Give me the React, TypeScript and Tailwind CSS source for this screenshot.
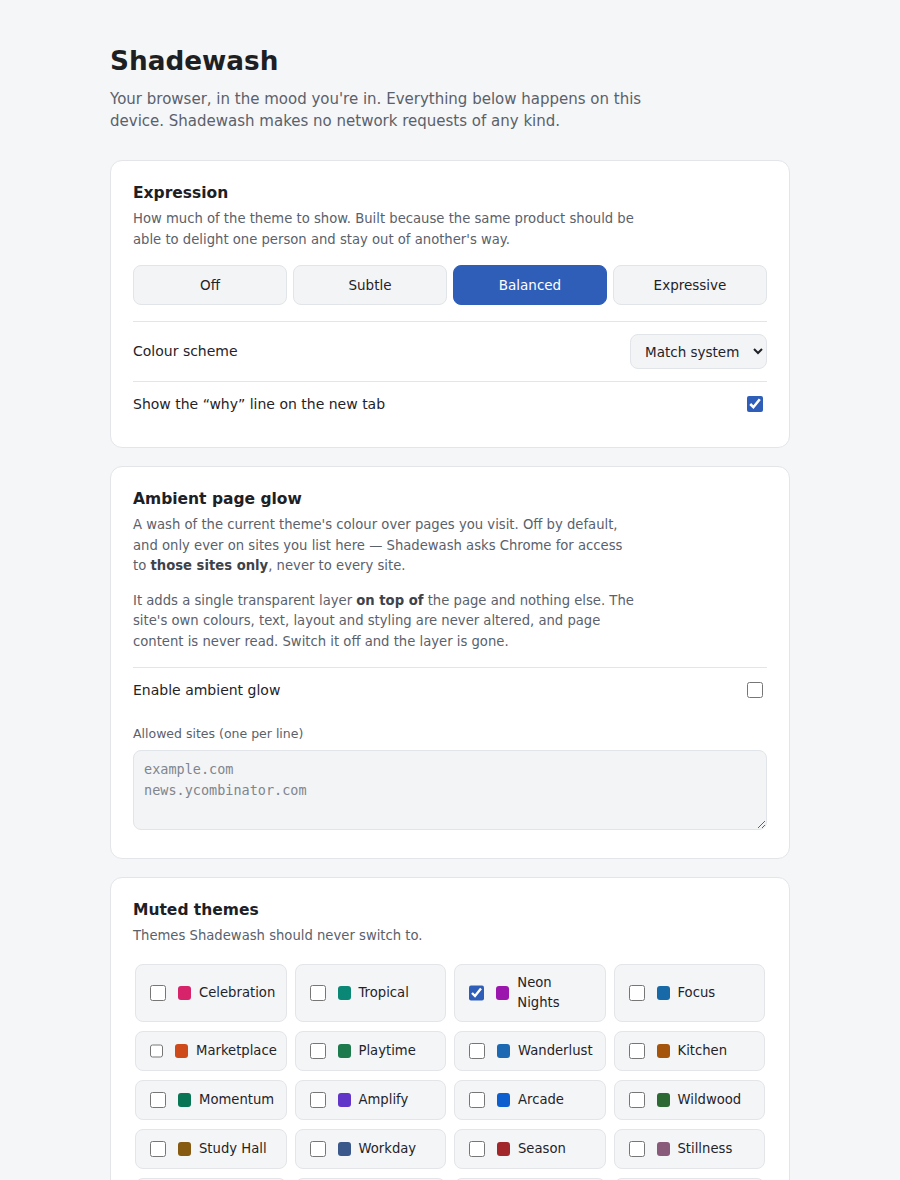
import React, { useState } from 'react';

const levels = ['Off', 'Subtle', 'Balanced', 'Expressive'];

const themes: { name: string; color: string }[] = [
  { name: 'Celebration', color: '#d6236a' },
  { name: 'Tropical', color: '#0b8775' },
  { name: 'Neon Nights', color: '#9b16ad' },
  { name: 'Focus', color: '#1769a8' },
  { name: 'Marketplace', color: '#cf4a1a' },
  { name: 'Playtime', color: '#1d7a4c' },
  { name: 'Wanderlust', color: '#1c68b3' },
  { name: 'Kitchen', color: '#a5550b' },
  { name: 'Momentum', color: '#087554' },
  { name: 'Amplify', color: '#6235c9' },
  { name: 'Arcade', color: '#0d5fcf' },
  { name: 'Wildwood', color: '#2d6a33' },
  { name: 'Study Hall', color: '#875a12' },
  { name: 'Workday', color: '#3a5889' },
  { name: 'Season', color: '#a2272b' },
  { name: 'Stillness', color: '#8a5a7b' },
  { name: 'Harvest', color: '#9a6a10' },
  { name: 'Nocturne', color: '#32387a' },
  { name: 'Bloom', color: '#c23c7e' },
  { name: 'Coastal', color: '#16788c' },
];

const Card: React.FC<{ title: string; children: React.ReactNode }> = ({ title, children }) => (
  <section className="rounded-xl border border-[#e3e5e9] bg-white p-[22px]">
    <h2 className="text-[15.5px] leading-5 font-bold text-[#1d2025]">{title}</h2>
    {children}
  </section>
);

export default function App() {
  const [level, setLevel] = useState('Balanced');
  const [why, setWhy] = useState(true);
  const [glow, setGlow] = useState(false);
  const [muted, setMuted] = useState<string[]>(['Neon Nights']);

  const toggle = (name: string) =>
    setMuted((m) => (m.includes(name) ? m.filter((n) => n !== name) : [...m, name]));

  return (
    <div className="min-h-screen bg-[#f5f6f8] font-['DejaVu_Sans',sans-serif] text-[#1f2328]">
      <div className="mx-auto w-[680px] pt-[45px] pb-10">
        <h1 className="text-[26.3px] leading-8 font-bold text-[#1d1f23]">Shadewash</h1>
        <p className="mt-[11px] max-w-[560px] text-[15px] leading-[22px] text-[#5a616b]">
          Your browser, in the mood you're in. Everything below happens on this device. Shadewash
          makes no network requests of any kind.
        </p>

        <div className="mt-7 flex flex-col gap-[18px]">
          <Card title="Expression">
            <p className="mt-1.5 max-w-[504px] text-[13.2px] leading-[20.5px] text-[#5a616b]">
              How much of the theme to show. Built because the same product should be able to
              delight one person and stay out of another's way.
            </p>
            <div className="mt-[15px] grid grid-cols-4 gap-1.5">
              {levels.map((l) => (
                <button
                  key={l}
                  onClick={() => setLevel(l)}
                  className={
                    l === level
                      ? 'h-10 rounded-lg border border-[#2f5eb8] bg-[#2f5eb8] text-[13.5px] text-white'
                      : 'h-10 rounded-lg border border-[#e1e4e8] bg-[#f3f4f6] text-[13.5px] text-[#1f2328]'
                  }
                >
                  {l}
                </button>
              ))}
            </div>
            <div className="mt-4 flex items-center justify-between border-t border-[#e3e5e9] py-3">
              <span className="text-[14px]">Colour scheme</span>
              <select className="h-[35px] w-[137px] rounded-lg border border-[#e1e4e8] bg-[#f3f4f6] pl-2.5 text-[13.5px] text-[#1f2328]">
                <option>Match system</option>
                <option>Light</option>
                <option>Dark</option>
              </select>
            </div>
            <div className="flex items-center justify-between border-t border-[#e3e5e9] pt-3 pb-[11px] leading-5">
              <span className="text-[14px]">Show the “why” line on the new tab</span>
              <input
                type="checkbox"
                checked={why}
                onChange={() => setWhy(!why)}
                className="mr-1 h-4 w-4 accent-[#2f5eb8]"
              />
            </div>
          </Card>

          <Card title="Ambient page glow">
            <p className="mt-1.5 max-w-[504px] text-[13.2px] leading-[20.5px] text-[#5a616b]">
              A wash of the current theme's colour over pages you visit. Off by default, and only
              ever on sites you list here — Shadewash asks Chrome for access to{' '}
              <strong className="font-bold text-[#3d434b]">those sites only</strong>, never to every
              site.
            </p>
            <p className="mt-3.5 max-w-[504px] text-[13.2px] leading-[20.5px] text-[#5a616b]">
              It adds a single transparent layer{' '}
              <strong className="font-bold text-[#3d434b]">on top of</strong> the page and nothing
              else. The site's own colours, text, layout and styling are never altered, and page
              content is never read. Switch it off and the layer is gone.
            </p>
            <div className="mt-[15px] flex items-center justify-between border-t border-[#e3e5e9] py-3 leading-5">
              <span className="text-[14px]">Enable ambient glow</span>
              <input
                type="checkbox"
                checked={glow}
                onChange={() => setGlow(!glow)}
                className="mr-1 h-4 w-4 accent-[#2f5eb8]"
              />
            </div>
            <label className="mt-3.5 block text-[12.5px] leading-4 text-[#5a616b]">
              Allowed sites (one per line)
            </label>
            <textarea
              placeholder={'example.com\nnews.ycombinator.com'}
              className="mt-2 mb-1.5 block h-20 w-full rounded-lg border border-[#e1e4e8] bg-[#f3f4f6] px-2.5 py-2 font-['DejaVu_Sans_Mono',monospace] text-[13.5px] leading-[21px] placeholder:text-[#80858d]"
            />
          </Card>

          <Card title="Muted themes">
            <p className="mt-1.5 max-w-[504px] text-[13.2px] leading-[20.5px] text-[#5a616b]">
              Themes Shadewash should never switch to.
            </p>
            <div className="mt-[15px] grid grid-cols-4 gap-x-2 gap-y-[9px] p-0.5">
              {themes.map((t) => (
                <label
                  key={t.name}
                  className="flex min-h-10 items-center rounded-lg border border-[#e3e5e9] bg-[#f4f5f7] py-2 pr-2.5 pl-3.5 text-[13.2px] leading-5"
                >
                  <input
                    type="checkbox"
                    checked={muted.includes(t.name)}
                    onChange={() => toggle(t.name)}
                    className="h-4 w-4 accent-[#2f5eb8]"
                  />
                  <span
                    className="ml-3 h-[14px] w-[13px] shrink-0 rounded-[3px]"
                    style={{ backgroundColor: t.color }}
                  />
                  <span className="ml-2">{t.name}</span>
                </label>
              ))}
            </div>
          </Card>
        </div>
      </div>
    </div>
  );
}
